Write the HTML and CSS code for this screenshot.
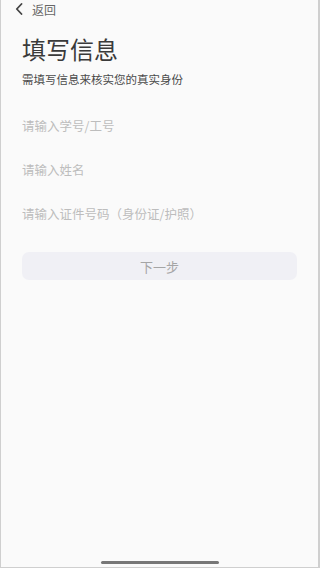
FILE: index.html
```
<!DOCTYPE html>
<html lang="zh-CN">
<head>
    <meta charset="UTF-8">
    <meta name="viewport" content="width=device-width, initial-scale=1.0">
    <title>填写信息</title>
    <link rel="stylesheet" href="styles.css">
</head>
<body>

    <div class="screen">
        <div class="nav">
            <svg class="back-icon" width="8" height="12" viewBox="0 0 8 12">
                <path d="M6.5 1 L1.8 6 L6.5 11" fill="none" stroke="#444" stroke-width="1.8" stroke-linecap="round" stroke-linejoin="round"/>
            </svg>
            <span class="back-text">返回</span>
        </div>

        <div class="content">
            <h1>填写信息</h1>
            <p class="subtitle">需填写信息来核实您的真实身份</p>

            <form class="info-form">
                <div class="field">
                    <input type="text" name="number" placeholder="请输入学号/工号">
                </div>
                <div class="field">
                    <input type="text" name="name" placeholder="请输入姓名">
                </div>
                <div class="field">
                    <input type="text" name="id_card" placeholder="请输入证件号码（身份证/护照）">
                </div>

                <button type="button" class="next-btn" disabled>下一步</button>
            </form>
        </div>

        <div class="home-bar"></div>
    </div>

</body>
</html>
```

FILE: styles.css
```
* {
    margin: 0;
    padding: 0;
    box-sizing: border-box;
}

body {
    font-family: "Noto Sans CJK SC", "Noto Sans", sans-serif;
    background-color: #fafafa;
    color: #333;
}

.screen {
    height: 568px;
    display: flex;
    flex-direction: column;
    background-color: #fafafa;
    border-left: 1px solid #cfcfcf;
    border-right: 2px solid #cfcfcf;
    border-bottom: 1px solid #cfcfcf;
}

.nav {
    height: 18px;
    display: flex;
    align-items: center;
    padding-left: 14px;
}

.back-icon {
    display: block;
}

.back-text {
    margin-left: 9px;
    font-size: 12px;
    color: #666;
}

.content {
    padding: 0 21px;
}

h1 {
    margin-top: 17px;
    font-size: 24px;
    line-height: 28px;
    font-weight: 400;
    color: #3a3a3a;
}

.subtitle {
    margin-top: 8px;
    font-size: 11.5px;
    line-height: 16px;
    color: #4a4a4a;
}

.info-form {
    margin-top: 16px;
}

.field {
    height: 44px;
    display: flex;
    align-items: center;
}

.field input {
    width: 100%;
    border: none;
    outline: none;
    background: transparent;
    font-family: inherit;
    font-size: 12.5px;
    color: #333;
}

.field input::placeholder {
    color: #bdbdbd;
}

.next-btn {
    display: block;
    width: 100%;
    height: 28px;
    margin-top: 17px;
    border: none;
    border-radius: 7px;
    background-color: #f0f0f5;
    font-family: inherit;
    font-size: 13px;
    color: #a5a5a5;
}

.home-bar {
    margin-top: auto;
    margin-bottom: 3px;
    align-self: center;
    width: 118px;
    height: 3px;
    border-radius: 2px;
    background-color: #777;
}
```
